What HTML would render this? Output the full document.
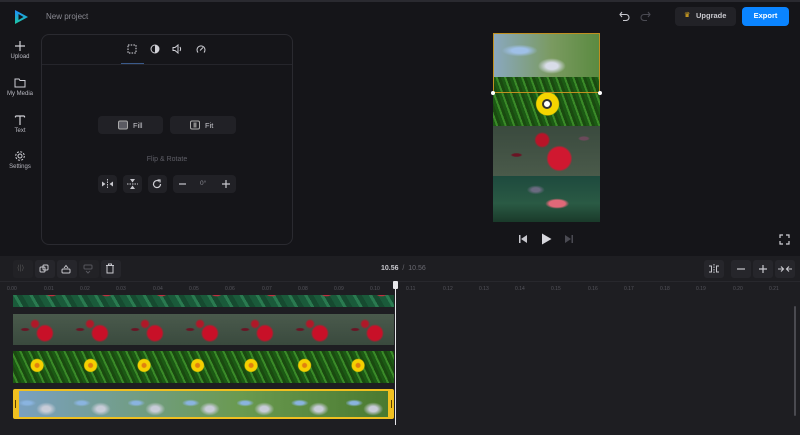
<!DOCTYPE html>
<html><head><meta charset="utf-8"><style>
*{box-sizing:border-box;margin:0;padding:0}
body{width:800px;height:435px;overflow:hidden;background:#151519;font-family:"Liberation Sans",sans-serif;color:#d8d8dc;position:relative}
.a{position:absolute}
.lbl{font-size:6px;color:#b8b8c0;text-align:center;width:40px;left:0}
.btn{position:absolute;background:#212126;border-radius:4px}
.tbtn{position:absolute;background:#26262b;border-radius:3px;top:260px;height:18px;width:20px}
.tick{position:absolute;top:286px;font-size:5px;color:#55555c}
.trk{position:absolute;left:13px;width:381px;background-repeat:repeat-x}
svg{position:absolute}
</style></head><body>
<div class="a" style="left:0;top:0;width:800px;height:2px;background:#2a2a30"></div>
<svg style="left:13px;top:9px" width="16" height="16" viewBox="0 0 16 16"><defs><linearGradient id="g" x1="0" y1="0" x2="0" y2="1"><stop offset="0" stop-color="#1e8cff"/><stop offset="1" stop-color="#1ec9a0"/></linearGradient></defs><path d="M2 1 L15 8 L2 15 Z M5.5 5 L5.5 11 L10.5 8 Z" fill="url(#g)" fill-rule="evenodd"/></svg>
<div class="a" style="left:46px;top:12px;font-size:8px;color:#8a8a92">New project</div>
<svg style="left:14px;top:40px" width="12" height="12" viewBox="0 0 12 12"><path d="M6 1v10M1 6h10" stroke="#d0d0d6" stroke-width="1.2"/></svg>
<div class="a lbl" style="top:54px">Upload</div>
<svg style="left:14px;top:77px" width="12" height="11" viewBox="0 0 12 11"><path d="M1 2h4l1 1.5h5v6.5h-10z" fill="none" stroke="#d0d0d6" stroke-width="1"/></svg>
<div class="a lbl" style="top:91px">My Media</div>
<svg style="left:14px;top:114px" width="12" height="12" viewBox="0 0 12 12"><path d="M1.5 2h9M6 2v9M1.5 2v1.5M10.5 2v1.5" stroke="#d0d0d6" stroke-width="1.2" fill="none"/></svg>
<div class="a lbl" style="top:128px">Text</div>
<svg style="left:14px;top:150px" width="12" height="12" viewBox="0 0 12 12"><circle cx="6" cy="6" r="2" fill="none" stroke="#d0d0d6"/><circle cx="6" cy="6" r="4.3" fill="none" stroke="#d0d0d6" stroke-dasharray="2 1.4"/></svg>
<div class="a lbl" style="top:164px">Settings</div>
<div class="a" style="left:41px;top:34px;width:252px;height:211px;border:1px solid #2a2a30;border-radius:8px"></div>
<div class="a" style="left:42px;top:64px;width:250px;height:1px;background:#25252b"></div>
<div class="a" style="left:121px;top:63px;width:23px;height:1px;background:#3a5a8a"></div>
<svg style="left:127px;top:44px" width="10" height="10" viewBox="0 0 10 10"><rect x="1" y="1" width="8" height="8" fill="none" stroke="#e0e0e6" stroke-dasharray="1.5 1.2"/></svg>
<svg style="left:150px;top:44px" width="10" height="10" viewBox="0 0 10 10"><circle cx="5" cy="5" r="4" fill="none" stroke="#d0d0d6"/><path d="M5 1a4 4 0 0 1 0 8z" fill="#d0d0d6"/></svg>
<svg style="left:172px;top:44px" width="11" height="10" viewBox="0 0 11 10"><path d="M1 3.5h2l3-2.5v8l-3-2.5h-2z" fill="none" stroke="#d0d0d6"/><path d="M8 3q1.2 2 0 4" stroke="#d0d0d6" fill="none"/></svg>
<svg style="left:196px;top:44px" width="10" height="10" viewBox="0 0 10 10"><path d="M2 8.5A4 4 0 1 1 8 8.5" fill="none" stroke="#d0d0d6"/><path d="M4 6.5l3-3" stroke="#d0d0d6"/></svg>
<div class="btn" style="left:98px;top:116px;width:65px;height:18px"></div>
<svg style="left:118px;top:120px" width="10" height="10" viewBox="0 0 10 10"><rect x="0.5" y="1" width="9" height="8" rx="1.5" fill="#5a5a62" stroke="#aaa"/></svg>
<div class="a" style="left:133px;top:121px;font-size:7.5px;color:#c8c8ce">Fill</div>
<div class="btn" style="left:170px;top:116px;width:66px;height:18px"></div>
<svg style="left:190px;top:120px" width="10" height="10" viewBox="0 0 10 10"><rect x="0.5" y="1" width="9" height="8" rx="1.5" fill="none" stroke="#aaa"/><rect x="3.5" y="2.5" width="3" height="5" fill="#888"/></svg>
<div class="a" style="left:205px;top:121px;font-size:7.5px;color:#c8c8ce">Fit</div>
<div class="a" style="left:98px;top:156px;width:138px;text-align:center;font-size:7px;color:#5e5e66">Flip &amp; Rotate</div>
<div class="btn" style="left:98px;top:175px;width:19px;height:18px"></div>
<svg style="left:101px;top:179px" width="13" height="10" viewBox="0 0 13 10"><path d="M6.5 0v10" stroke="#c8c8ce" stroke-dasharray="1.5 1"/><path d="M1 2.5v5l3.5-2.5zM12 2.5v5l-3.5-2.5z" fill="#c8c8ce"/></svg>
<div class="btn" style="left:123px;top:175px;width:19px;height:18px"></div>
<svg style="left:127px;top:178px" width="11" height="12" viewBox="0 0 11 12"><path d="M0 6h11" stroke="#c8c8ce" stroke-dasharray="1.5 1"/><path d="M3 1h5l-2.5 3.5zM3 11h5l-2.5-3.5z" fill="#c8c8ce"/></svg>
<div class="btn" style="left:148px;top:175px;width:19px;height:18px"></div>
<svg style="left:152px;top:179px" width="10" height="10" viewBox="0 0 10 10"><path d="M8.5 5A3.5 3.5 0 1 1 7 2.2" fill="none" stroke="#d0d0d6" stroke-width="1.2"/><path d="M5.5 1h2.5v2.5" fill="none" stroke="#d0d0d6" stroke-width="1.2"/></svg>
<div class="btn" style="left:173px;top:175px;width:63px;height:18px"></div>
<svg style="left:179px;top:181px" width="7" height="6"><path d="M0 3h7" stroke="#c8c8ce" stroke-width="1.2"/></svg>
<div class="a" style="left:200px;top:180px;font-size:6.5px;color:#8a8a92">0°</div>
<svg style="left:222px;top:180px" width="8" height="8"><path d="M0 4h8M4 0v8" stroke="#c8c8ce" stroke-width="1.2"/></svg>
<svg style="left:619px;top:11px" width="12" height="10" viewBox="0 0 12 10"><path d="M3 1L1 3.5 3 6M1 3.5h6a3 3 0 0 1 0 6H4" fill="none" stroke="#c8c8ce" stroke-width="1.1"/></svg>
<svg style="left:639px;top:11px" width="12" height="10" viewBox="0 0 12 10"><path d="M9 1l2 2.5L9 6M11 3.5H5a3 3 0 0 0 0 6h3" fill="none" stroke="#4a4a52" stroke-width="1.1"/></svg>
<div class="btn" style="left:675px;top:7px;width:61px;height:19px;background:#222227"></div>
<div class="a" style="left:684px;top:11px;font-size:7px;color:#f0b820">♛</div>
<div class="a" style="left:696px;top:11px;font-size:7.5px;color:#c8c8ce;font-weight:bold">Upgrade</div>
<div class="btn" style="left:742px;top:7px;width:47px;height:19px;background:#0a84ff"></div>
<div class="a" style="left:742px;top:11px;width:47px;text-align:center;font-size:7.5px;color:#fff;font-weight:bold">Export</div>
<div class="a" style="left:493px;top:33px;width:107px;height:44px;background:radial-gradient(ellipse at 55% 75%,#d8dce8 0 6px,transparent 14px),radial-gradient(ellipse at 25% 40%,#9fc0e8 0 8px,transparent 18px),linear-gradient(90deg,#8aa8c0,#7a9a60 55%,#5a8a40)"></div>
<div class="a" style="left:493px;top:77px;width:107px;height:49px;background:radial-gradient(circle at 51% 55%,#e8a010 0 3px,#f5d500 4px 11px,transparent 12px),repeating-linear-gradient(70deg,#1c5a14 0 3px,#3a8a28 3px 5px,#1a4a10 5px 8px)"></div>
<div class="a" style="left:493px;top:126px;width:107px;height:50px;background:radial-gradient(circle at 62% 65%,#d01830 0 11px,transparent 13px),radial-gradient(circle at 46% 28%,#b81428 0 6px,transparent 8px),radial-gradient(ellipse at 22% 58%,#6a1424 0 4px,transparent 6px),radial-gradient(ellipse at 85% 25%,#6a4a5a 0 4px,transparent 6px),linear-gradient(#3a4a3e,#4a5a4a)"></div>
<div class="a" style="left:493px;top:176px;width:107px;height:46px;background:radial-gradient(ellipse at 60% 60%,#e06878 0 8px,transparent 12px),radial-gradient(ellipse at 40% 30%,#6a6a80 0 4px,transparent 9px),linear-gradient(#1e4a3e,#2a5a44 60%,#1a3a2a)"></div>
<div class="a" style="left:493px;top:33px;width:107px;height:60px;border:1px solid #c09020"></div>
<div class="a" style="left:491px;top:91px;width:4px;height:4px;background:#fff;border-radius:2px"></div>
<div class="a" style="left:598px;top:91px;width:4px;height:4px;background:#fff;border-radius:2px"></div>
<div class="a" style="left:542px;top:99px;width:10px;height:10px;border-radius:5px;background:#fff;border:2px solid #333"></div>
<svg style="left:518px;top:234px" width="10" height="10" viewBox="0 0 10 10"><path d="M1 1h1.5v8H1zM9 1v8L3 5z" fill="#c8c8ce"/></svg>
<svg style="left:541px;top:233px" width="11" height="12" viewBox="0 0 11 12"><path d="M1 0.5v11L10.5 6z" fill="#d8d8de"/></svg>
<svg style="left:564px;top:234px" width="10" height="10" viewBox="0 0 10 10"><path d="M1 1v8L7 5zM7.5 1H9v8H7.5z" fill="#4a4a52"/></svg>
<svg style="left:779px;top:234px" width="11" height="11" viewBox="0 0 11 11"><path d="M1 4V1h3M7 1h3v3M10 7v3H7M4 10H1V7" fill="none" stroke="#d0d0d6" stroke-width="1.2"/></svg>
<div class="a" style="left:0;top:256px;width:800px;height:179px;background:#1e1e22"></div>
<div class="a" style="left:0;top:281px;width:800px;height:1px;background:#28282d"></div>
<div class="tbtn" style="left:13px;background:#222226"></div><div class="a" style="left:17px;top:264px;font-size:7px;color:#555">⟨|⟩</div>
<div class="tbtn" style="left:35px"></div><svg style="left:39px;top:264px" width="10" height="10" viewBox="0 0 10 10"><rect x="1" y="3" width="5" height="5" rx="1" fill="none" stroke="#c8c8ce"/><rect x="4" y="1" width="5" height="5" rx="1" fill="none" stroke="#c8c8ce"/></svg>
<div class="tbtn" style="left:57px"></div><svg style="left:61px;top:264px" width="10" height="10" viewBox="0 0 10 10"><path d="M3 4l2-2.5L7 4" fill="none" stroke="#c8c8ce"/><rect x="1" y="5" width="8" height="4" rx="1" fill="none" stroke="#c8c8ce"/></svg>
<div class="tbtn" style="left:79px;background:#222226"></div><svg style="left:83px;top:264px" width="10" height="10" viewBox="0 0 10 10"><rect x="1" y="1" width="8" height="4" rx="1" fill="none" stroke="#55555c"/><path d="M3 7l2 2 2-2" fill="none" stroke="#55555c"/></svg>
<div class="tbtn" style="left:101px"></div><svg style="left:105px;top:263px" width="10" height="11" viewBox="0 0 10 11"><path d="M1 2.5h8M3.5 2.5V1h3v1.5M2 2.5v7.5h6V2.5" fill="none" stroke="#c8c8ce"/></svg>
<div class="a" style="left:381px;top:265px;font-size:7px;color:#c8c8ce;font-weight:bold">10.56 <span style="color:#6a6a72;font-weight:normal">&nbsp;/&nbsp; 10.56</span></div>
<div class="tbtn" style="left:704px"></div><svg style="left:708px;top:264px" width="12" height="10" viewBox="0 0 12 10"><path d="M6 0v10" stroke="#c8c8ce" stroke-dasharray="1.5 1"/><path d="M1 2h2.5v6H1M11 2H8.5v6H11" fill="none" stroke="#c8c8ce"/></svg>
<div class="tbtn" style="left:731px"></div><svg style="left:737px;top:268px" width="8" height="2"><path d="M0 1h8" stroke="#c8c8ce" stroke-width="1.2"/></svg>
<div class="tbtn" style="left:753px"></div><svg style="left:759px;top:265px" width="8" height="8"><path d="M0 4h8M4 0v8" stroke="#c8c8ce" stroke-width="1.2"/></svg>
<div class="tbtn" style="left:775px"></div><svg style="left:778px;top:265px" width="14" height="8" viewBox="0 0 14 8"><path d="M0 4h5M3 1.5L5.5 4 3 6.5M14 4H9M11 1.5L8.5 4 11 6.5" fill="none" stroke="#c8c8ce" stroke-width="1.1"/></svg>
<div class="tick" style="left:7px">0.00</div><div class="tick" style="left:44px">0.01</div><div class="tick" style="left:80px">0.02</div><div class="tick" style="left:116px">0.03</div><div class="tick" style="left:153px">0.04</div><div class="tick" style="left:189px">0.05</div><div class="tick" style="left:225px">0.06</div><div class="tick" style="left:262px">0.07</div><div class="tick" style="left:298px">0.08</div><div class="tick" style="left:334px">0.09</div><div class="tick" style="left:370px">0.10</div><div class="tick" style="left:406px">0.11</div><div class="tick" style="left:443px">0.12</div><div class="tick" style="left:479px">0.13</div><div class="tick" style="left:515px">0.14</div><div class="tick" style="left:551px">0.15</div><div class="tick" style="left:588px">0.16</div><div class="tick" style="left:624px">0.17</div><div class="tick" style="left:660px">0.18</div><div class="tick" style="left:696px">0.19</div><div class="tick" style="left:733px">0.20</div><div class="tick" style="left:769px">0.21</div>
<div class="trk" style="top:295px;height:12px;background:radial-gradient(ellipse at 70% 0,#c03040 0 3px,transparent 5px) 0 0/55px 12px,repeating-linear-gradient(60deg,#1a5a3a 0 6px,#2a7a50 6px 9px,#164a30 9px 14px)"></div>
<div class="trk" style="top:314px;height:31px;background:radial-gradient(circle at 58% 62%,#c81028 0 7px,transparent 9px) 0 0/55px 31px,radial-gradient(circle at 40% 32%,#b01828 0 3px,transparent 5px) 0 0/55px 31px,radial-gradient(ellipse at 22% 50%,#6a1424 0 3px,transparent 5px) 0 0/55px 31px,linear-gradient(#4a5a4c,#3a4a3e)"></div>
<div class="trk" style="top:351px;height:32px;background:radial-gradient(circle at 45% 45%,#e08010 0 2px,#f5d000 3px 6px,transparent 7px) 0 0/53.5px 32px,repeating-linear-gradient(65deg,#1c5a14 0 3px,#3a8a28 3px 5px,#1a4a10 5px 8px)"></div>
<div class="trk" style="top:389px;height:30px;background:radial-gradient(ellipse at 50% 60%,#c8ccd8 0 4px,transparent 10px) 0 0/54.5px 30px,radial-gradient(ellipse at 15% 40%,#8ab4e0 0 4px,transparent 9px) 0 0/54.5px 30px,linear-gradient(90deg,#7aa0c0,#6a9a50 60%,#4a7a30);border:2px solid #f0c020;border-left-width:6px;border-right-width:6px;border-radius:2px"></div>
<div class="a" style="left:15px;top:400px;width:1px;height:8px;background:#5a4000"></div>
<div class="a" style="left:391px;top:400px;width:1px;height:8px;background:#5a4000"></div>
<div class="a" style="left:395px;top:284px;width:1px;height:141px;background:#e8e8ec"></div>
<div class="a" style="left:393px;top:281px;width:5px;height:8px;background:#e8e8ec;border-radius:1px"></div>
<div class="a" style="left:794px;top:306px;width:2px;height:110px;background:#4a4a50;border-radius:1px"></div>
</body></html>
